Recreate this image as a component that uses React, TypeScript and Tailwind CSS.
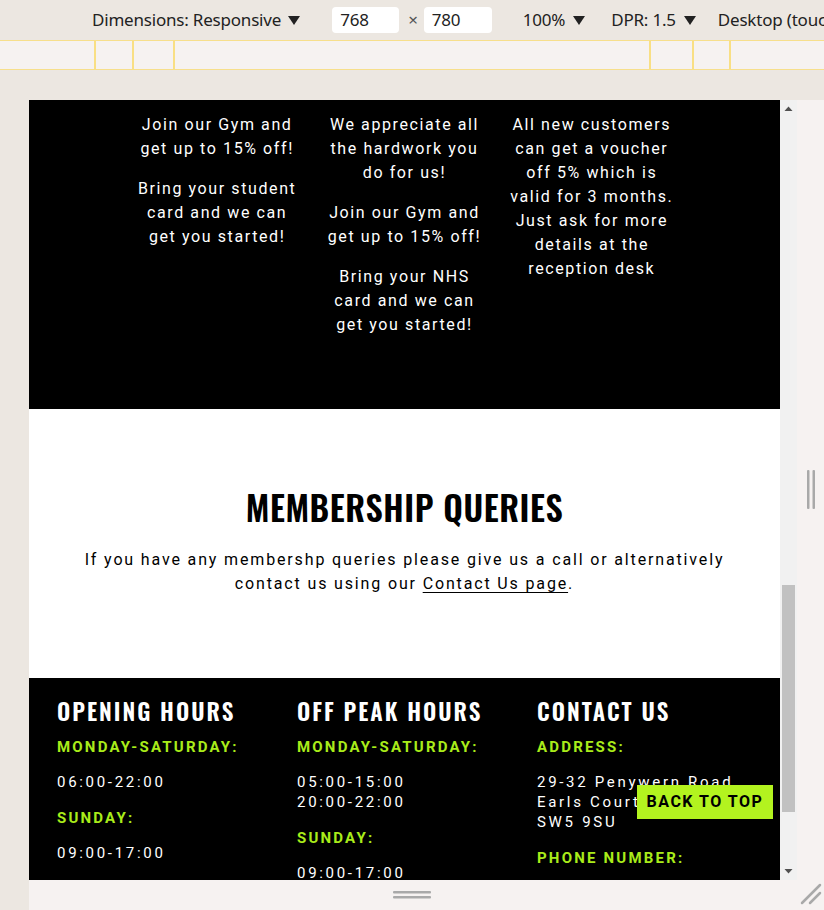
import React from "react";

const body = "font-['Roboto','Liberation_Sans',sans-serif]";
const cond = "font-['Oswald','Fjalla_One','Liberation_Sans_Narrow','Roboto_Condensed','DejaVu_Sans_Condensed',sans-serif]";

function Caret() {
  return (
    <svg width="12" height="10" viewBox="0 0 12 10" className="inline-block shrink-0">
      <path d="M0 1 L12 1 L6 10 Z" fill="#222" />
    </svg>
  );
}

function Toolbar() {
  return (
    <div className="h-[40px] flex items-center whitespace-nowrap overflow-hidden text-[17px] text-[#222] font-['Noto_Sans','Open_Sans',sans-serif] tracking-[-0.2px]">
      <div className="ml-[92px] shrink-0 flex items-center gap-[7px]">
        <span>Dimensions: Responsive</span>
        <Caret />
      </div>
      <div className="ml-[32px] shrink-0 w-[67px] h-[26px] bg-white rounded-[4px] flex items-center pl-[8px]">768</div>
      <span className="ml-[9px] mr-[6px] shrink-0 text-[#555] text-[17px]">×</span>
      <div className="shrink-0 w-[68px] h-[26px] bg-white rounded-[4px] flex items-center pl-[8px]">780</div>
      <div className="ml-[31px] shrink-0 flex items-center gap-[8px]">
        <span>100%</span>
        <Caret />
      </div>
      <div className="ml-[26px] shrink-0 flex items-center gap-[8px]">
        <span>DPR: 1.5</span>
        <Caret />
      </div>
      <div className="ml-[22px] shrink-0">Desktop (touch)</div>
    </div>
  );
}

function Ruler() {
  const ticks = [95, 133, 174, 650, 693, 730];
  return (
    <div className="h-[30px] bg-[#f6f2f1] border-y border-[#f7df8c]">
      <svg width="824" height="28" className="block">
        {ticks.map((x) => (
          <rect key={x} x={x - 1} y={0} width={2} height={28} fill="#f9df84" />
        ))}
      </svg>
    </div>
  );
}

function Promo({ paras }: { paras: string[][] }) {
  return (
    <div className="px-[4px] flex flex-col gap-[16px]">
      {paras.map((lines, i) => (
        <p key={i} className="text-center whitespace-nowrap">
          {lines.map((l, j) => (
            <span key={j} className="block">
              {l}
            </span>
          ))}
        </p>
      ))}
    </div>
  );
}

function Label({ children }: { children: React.ReactNode }) {
  return (
    <p className="text-[15px] leading-[20px] font-bold tracking-[2.2px] text-[#a9ec1a] uppercase">{children}</p>
  );
}

function Value({ lines }: { lines: string[] }) {
  return (
    <p className="text-[15px] leading-[20px] tracking-[2.7px] text-white whitespace-nowrap">
      {lines.map((l, i) => (
        <span key={i} className="block">
          {l}
        </span>
      ))}
    </p>
  );
}

function FooterCol({ title, items }: { title: string; items: { label: string; value: string[] }[] }) {
  return (
    <div className="flex flex-col">
      <h3 className={`${cond} text-[23px] leading-[30px] font-semibold tracking-[2px] text-white`}>{title}</h3>
      <div className="mt-[11px] flex flex-col">
        {items.map((it, i) => (
          <div key={i} className="flex flex-col gap-[15px] mb-[16px]">
            <Label>{it.label}</Label>
            <Value lines={it.value} />
          </div>
        ))}
      </div>
    </div>
  );
}

function Page() {
  return (
    <div className={`${body} relative w-[751px] h-[780px] overflow-hidden bg-black`}>
      <section className="bg-black h-[309px] pt-[13px] text-white text-[16px] leading-[24px] tracking-[1.6px]">
        <div className="w-[562px] mx-auto grid grid-cols-3">
          <Promo paras={[["Join our Gym and", "get up to 15% off!"], ["Bring your student", "card and we can", "get you started!"]]} />
          <Promo
            paras={[
              ["We appreciate all", "the hardwork you", "do for us!"],
              ["Join our Gym and", "get up to 15% off!"],
              ["Bring your NHS", "card and we can", "get you started!"],
            ]}
          />
          <Promo
            paras={[
              ["All new customers", "can get a voucher", "off 5% which is", "valid for 3 months.", "Just ask for more", "details at the", "reception desk"],
            ]}
          />
        </div>
      </section>
      <section className="bg-white h-[269px] flex flex-col items-center pt-[76px]">
        <h2 className={`${cond} text-[34px] leading-[44px] font-semibold tracking-[0.6px] text-black`}>MEMBERSHIP QUERIES</h2>
        <p className="mt-[19px] text-center text-[16px] leading-[24px] tracking-[1.85px] text-black">
          If you have any membershp queries please give us a call or alternatively
          <br />
          contact us using our <span className="underline underline-offset-[3px]">Contact Us page</span>.
        </p>
      </section>
      <section className="bg-black pl-[28px] pt-[18px] grid grid-cols-[240px_240px_1fr]">
        <FooterCol
          title="OPENING HOURS"
          items={[
            { label: "MONDAY-SATURDAY:", value: ["06:00-22:00"] },
            { label: "SUNDAY:", value: ["09:00-17:00"] },
          ]}
        />
        <FooterCol
          title="OFF PEAK HOURS"
          items={[
            { label: "MONDAY-SATURDAY:", value: ["05:00-15:00", "20:00-22:00"] },
            { label: "SUNDAY:", value: ["09:00-17:00"] },
          ]}
        />
        <FooterCol
          title="CONTACT US"
          items={[
            { label: "ADDRESS:", value: ["29-32 Penywern Road,", "Earls Court,", "SW5 9SU"] },
            { label: "PHONE NUMBER:", value: ["020 7370 0000"] },
          ]}
        />
      </section>
      <button className="absolute left-[608px] top-[685px] w-[136px] h-[34px] bg-[#b3f31f] text-black font-bold text-[16px] tracking-[1.5px] flex items-center justify-center">
        BACK TO TOP
      </button>
    </div>
  );
}

function Scrollbar() {
  return (
    <div className="w-[17px] h-[780px] bg-[#f1f1f1] flex flex-col items-center">
      <svg width="17" height="17" viewBox="0 0 17 17" className="block">
        <path d="M4.5 11 L12.5 11 L8.5 6.5 Z" fill="#505050" />
      </svg>
      <div className="h-[468px]" />
      <div className="w-[13px] h-[227px] bg-[#c1c1c1]" />
      <div className="flex-1" />
      <svg width="17" height="17" viewBox="0 0 17 17" className="block">
        <path d="M4.5 6 L12.5 6 L8.5 10.5 Z" fill="#505050" />
      </svg>
    </div>
  );
}

export default function App() {
  return (
    <div className="w-[824px] h-[910px] bg-[#ece7e1] overflow-hidden flex flex-col">
      <Toolbar />
      <Ruler />
      <div className="h-[30px]" />
      <div className="flex flex-1">
        <div className="w-[29px]" />
        <div className="flex-1 bg-[#f6f2f1] flex">
          <div className="flex flex-col">
            <div className="flex">
              <Page />
              <Scrollbar />
            </div>
            <div className="h-[30px] flex justify-center items-center">
              <svg width="40" height="10" viewBox="0 0 40 10" className="block">
                <rect x="0" y="1" width="38" height="2.5" rx="1" fill="#a9a9a9" />
                <rect x="0" y="6" width="38" height="2.5" rx="1" fill="#a9a9a9" />
              </svg>
            </div>
          </div>
          <div className="flex-1 flex flex-col items-center">
            <div className="mt-[370px]">
              <svg width="10" height="40" viewBox="0 0 10 40" className="block">
                <rect x="1" y="0" width="2.5" height="39" rx="1" fill="#a9a9a9" />
                <rect x="6.5" y="0" width="2.5" height="39" rx="1" fill="#a9a9a9" />
              </svg>
            </div>
            <div className="flex-1" />
            <svg width="24" height="24" viewBox="0 0 24 24" className="block mb-[4px]">
              <path d="M3 21 L21 3" stroke="#a9a9a9" strokeWidth="2.5" strokeLinecap="round" />
              <path d="M11 21 L21 11" stroke="#a9a9a9" strokeWidth="2.5" strokeLinecap="round" />
            </svg>
          </div>
        </div>
      </div>
    </div>
  );
}
